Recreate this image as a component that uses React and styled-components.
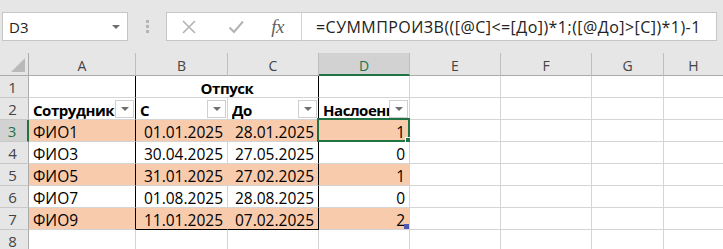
import React from "react";
import styled, { createGlobalStyle, css } from "styled-components";

const GlobalStyle = createGlobalStyle`
  html, body { margin: 0; padding: 0; background: #ffffff; overflow: hidden; }
  * { box-sizing: border-box; }
`;

const GREEN = "#217346";
const GRID = "#d4d4d4";
const PEACH = "#f8cbad";

const Window = styled.div`
  width: 723px;
  height: 249px;
  overflow: hidden;
  background: #ffffff;
  font-family: "Open Sans", "Noto Sans", sans-serif;
`;

/* ---------- formula bar ---------- */

const FormulaBar = styled.div`
  height: 53px;
  background: #e6e6e6;
  display: flex;
  align-items: flex-start;
  padding: 12px 6px 0 2px;
`;

const NameBox = styled.div`
  width: 126px;
  height: 29px;
  background: #ffffff;
  border: 1px solid #c6c6c6;
  display: flex;
  align-items: center;
  justify-content: space-between;
  padding: 0 7px 0 6px;
  font-size: 15px;
  color: #222;
`;

const Caret = styled.span`
  width: 0;
  height: 0;
  border-left: 4px solid transparent;
  border-right: 4px solid transparent;
  border-top: 4px solid #6e6e6e;
`;

const Grip = styled.div`
  width: 38px;
  height: 29px;
  display: flex;
  flex-direction: column;
  align-items: center;
  justify-content: center;
  gap: 2px;
`;

const GripDot = styled.span`
  width: 3px;
  height: 3px;
  background: #b4b4b4;
`;

const IconBox = styled.div`
  width: 135px;
  height: 29px;
  background: #ffffff;
  border: 1px solid #c6c6c6;
  border-right: none;
  display: flex;
  align-items: center;
  padding-left: 13px;
`;

const IconSlot = styled.span`
  width: ${(p) => p.$w}px;
  display: flex;
  align-items: center;
`;

const Fx = styled.span`
  font-family: "Liberation Serif", "DejaVu Serif", serif;
  font-style: italic;
  font-size: 19px;
  color: #5f5f5f;
  letter-spacing: -0.5px;
`;

const FormulaInput = styled.div`
  flex: 1;
  height: 29px;
  background: #ffffff;
  border: 1px solid #c6c6c6;
  border-left: 1px solid #d4d4d4;
  display: flex;
  align-items: center;
  padding-left: 14px;
  font-size: 16px;
  letter-spacing: 0.45px;
  color: #222;
  white-space: nowrap;
`;

/* ---------- sheet grid ---------- */

const COLS = [29, 107, 92, 91, 91, 91, 91, 72, 60];

const Sheet = styled.div`
  display: grid;
  grid-template-columns: ${COLS.map((c) => `${c}px`).join(" ")};
  grid-template-rows: 23px repeat(8, 22px);
`;

const Corner = styled.div`
  background: #e6e6e6;
  border-right: 1px solid #ababab;
  border-bottom: 1px solid #ababab;
  display: flex;
  align-items: flex-end;
  justify-content: flex-end;
  padding: 0 3px 3px 0;
`;

const CornerMark = styled.span`
  width: 0;
  height: 0;
  border-left: 14px solid transparent;
  border-bottom: 14px solid #b9b9b9;
`;

const ColHead = styled.div`
  background: ${(p) => (p.$active ? "#d2d2d2" : "#e6e6e6")};
  border-right: 1px solid #bfbfbf;
  border-bottom: ${(p) => (p.$active ? `2px solid ${GREEN}` : "1px solid #ababab")};
  color: ${(p) => (p.$active ? GREEN : "#444")};
  display: flex;
  align-items: center;
  justify-content: center;
  font-size: 14px;
  padding-top: ${(p) => (p.$active ? "3px" : "2px")};
`;

const RowHead = styled.div`
  background: ${(p) => (p.$active ? "#d2d2d2" : "#e6e6e6")};
  border-right: ${(p) => (p.$active ? `2px solid ${GREEN}` : "1px solid #ababab")};
  border-bottom: 1px solid #c8c8c8;
  color: ${(p) => (p.$active ? GREEN : "#444")};
  display: flex;
  align-items: center;
  justify-content: center;
  font-size: 15px;
  padding-right: 3px;
  padding-top: 1px;
`;

const Cell = styled.div`
  position: relative;
  min-width: 0;
  background: ${(p) => (p.$fill ? PEACH : "#ffffff")};
  border-right: 1px solid ${(p) => (p.$edgeRight ? "#000" : GRID)};
  border-bottom: 1px solid ${(p) => (p.$edgeBottom ? "#000" : GRID)};
  display: flex;
  align-items: center;
  justify-content: ${(p) => (p.$align === "right" ? "flex-end" : p.$align === "center" ? "center" : "flex-start")};
  padding: 2px 4px 0 4px;
  font-size: 15.5px;
  color: #000;
  white-space: nowrap;
  ${(p) =>
    p.$bold &&
    css`
      font-weight: 700;
      font-size: 15px;
      letter-spacing: -0.45px;
    `}
  ${(p) =>
    p.$span &&
    css`
      grid-column: span ${p.$span};
    `}
  ${(p) =>
    p.$filter &&
    css`
      padding-right: 1px;
    `}
`;

const CellText = styled.span`
  flex: 1;
  min-width: 0;
  overflow: hidden;
`;

const FilterButton = styled.span`
  flex: none;
  width: 19px;
  height: 18px;
  background: #ffffff;
  border: 1px solid #cfcfcf;
  display: flex;
  align-items: center;
  justify-content: center;
  margin-top: -2px;
`;

const FilterArrow = styled.span`
  width: 0;
  height: 0;
  border-left: 4px solid transparent;
  border-right: 4px solid transparent;
  border-top: 4px solid #6e6e6e;
`;

/* the active-cell outline sits over the gridlines */
const Selection = styled.span`
  position: absolute;
  left: -2px;
  top: -2px;
  right: -1px;
  bottom: -1px;
  border: 2px solid ${GREEN};
  pointer-events: none;
`;

const FillHandle = styled.span`
  position: absolute;
  right: -4px;
  bottom: -4px;
  width: 7px;
  height: 7px;
  background: ${GREEN};
  border: 1px solid #ffffff;
`;

const ResizeHandle = styled.span`
  position: absolute;
  right: 0;
  bottom: 0;
  width: 5px;
  height: 5px;
  background: #4b59b5;
`;

const letters = ["A", "B", "C", "D", "E", "F", "G", "H"];

const records = [
  { name: "ФИО1", from: "01.01.2025", to: "28.01.2025", overlap: 1 },
  { name: "ФИО3", from: "30.04.2025", to: "27.05.2025", overlap: 0 },
  { name: "ФИО5", from: "31.01.2025", to: "27.02.2025", overlap: 1 },
  { name: "ФИО7", from: "01.08.2025", to: "28.08.2025", overlap: 0 },
  { name: "ФИО9", from: "11.01.2025", to: "07.02.2025", overlap: 2 },
];

const Empty = ({ n }) =>
  Array.from({ length: n }, (_, i) => <Cell key={i} />);

function HeaderCell({ label, edgeRight }) {
  return (
    <Cell $bold $filter $edgeRight={edgeRight}>
      <CellText>{label}</CellText>
      <FilterButton>
        <FilterArrow />
      </FilterButton>
    </Cell>
  );
}

export default function App() {
  return (
    <Window>
      <GlobalStyle />
      <FormulaBar>
        <NameBox>
          <span>D3</span>
          <Caret />
        </NameBox>
        <Grip>
          <GripDot />
          <GripDot />
          <GripDot />
        </Grip>
        <IconBox>
          <IconSlot $w={47}>
            <svg width="18" height="18" viewBox="0 0 18 18">
              <path d="M3 3 L15 15 M15 3 L3 15" stroke="#b3b3b3" strokeWidth="1.6" fill="none" />
            </svg>
          </IconSlot>
          <IconSlot $w={45}>
            <svg width="18" height="18" viewBox="0 0 18 18">
              <path d="M2.5 9.5 L7 14 L16 3.5" stroke="#b3b3b3" strokeWidth="2" fill="none" />
            </svg>
          </IconSlot>
          <IconSlot $w={30}>
            <Fx>fx</Fx>
          </IconSlot>
        </IconBox>
        <FormulaInput>=СУММПРОИЗВ(([@С]&lt;=[До])*1;([@До]&gt;[С])*1)-1</FormulaInput>
      </FormulaBar>

      <Sheet>
        <Corner>
          <CornerMark />
        </Corner>
        {letters.map((l) => (
          <ColHead key={l} $active={l === "D"}>
            {l}
          </ColHead>
        ))}

        {/* row 1 */}
        <RowHead>1</RowHead>
        <Cell $edgeRight />
        <Cell $span={2} $bold $align="center" $edgeRight>
          Отпуск
        </Cell>
        <Empty n={5} />

        {/* row 2: table header */}
        <RowHead>2</RowHead>
        <HeaderCell label="Сотрудник" edgeRight />
        <HeaderCell label="С" />
        <HeaderCell label="До" edgeRight />
        <HeaderCell label="Наслоение" />
        <Empty n={4} />

        {records.map((r, i) => {
          const row = i + 3;
          const fill = i % 2 === 0;
          const last = i === records.length - 1;
          return (
            <React.Fragment key={r.name}>
              <RowHead $active={row === 3}>{row}</RowHead>
              <Cell $fill={fill} $edgeRight>
                {r.name}
              </Cell>
              <Cell $fill={fill} $align="right" $edgeBottom={last}>
                {r.from}
              </Cell>
              <Cell $fill={fill} $align="right" $edgeRight $edgeBottom={last}>
                {r.to}
              </Cell>
              <Cell $fill={fill} $align="right">
                {r.overlap}
                {row === 3 && (
                  <Selection>
                    <FillHandle />
                  </Selection>
                )}
                {last && <ResizeHandle />}
              </Cell>
              <Empty n={4} />
            </React.Fragment>
          );
        })}

        <RowHead>8</RowHead>
        <Empty n={8} />
      </Sheet>
    </Window>
  );
}
